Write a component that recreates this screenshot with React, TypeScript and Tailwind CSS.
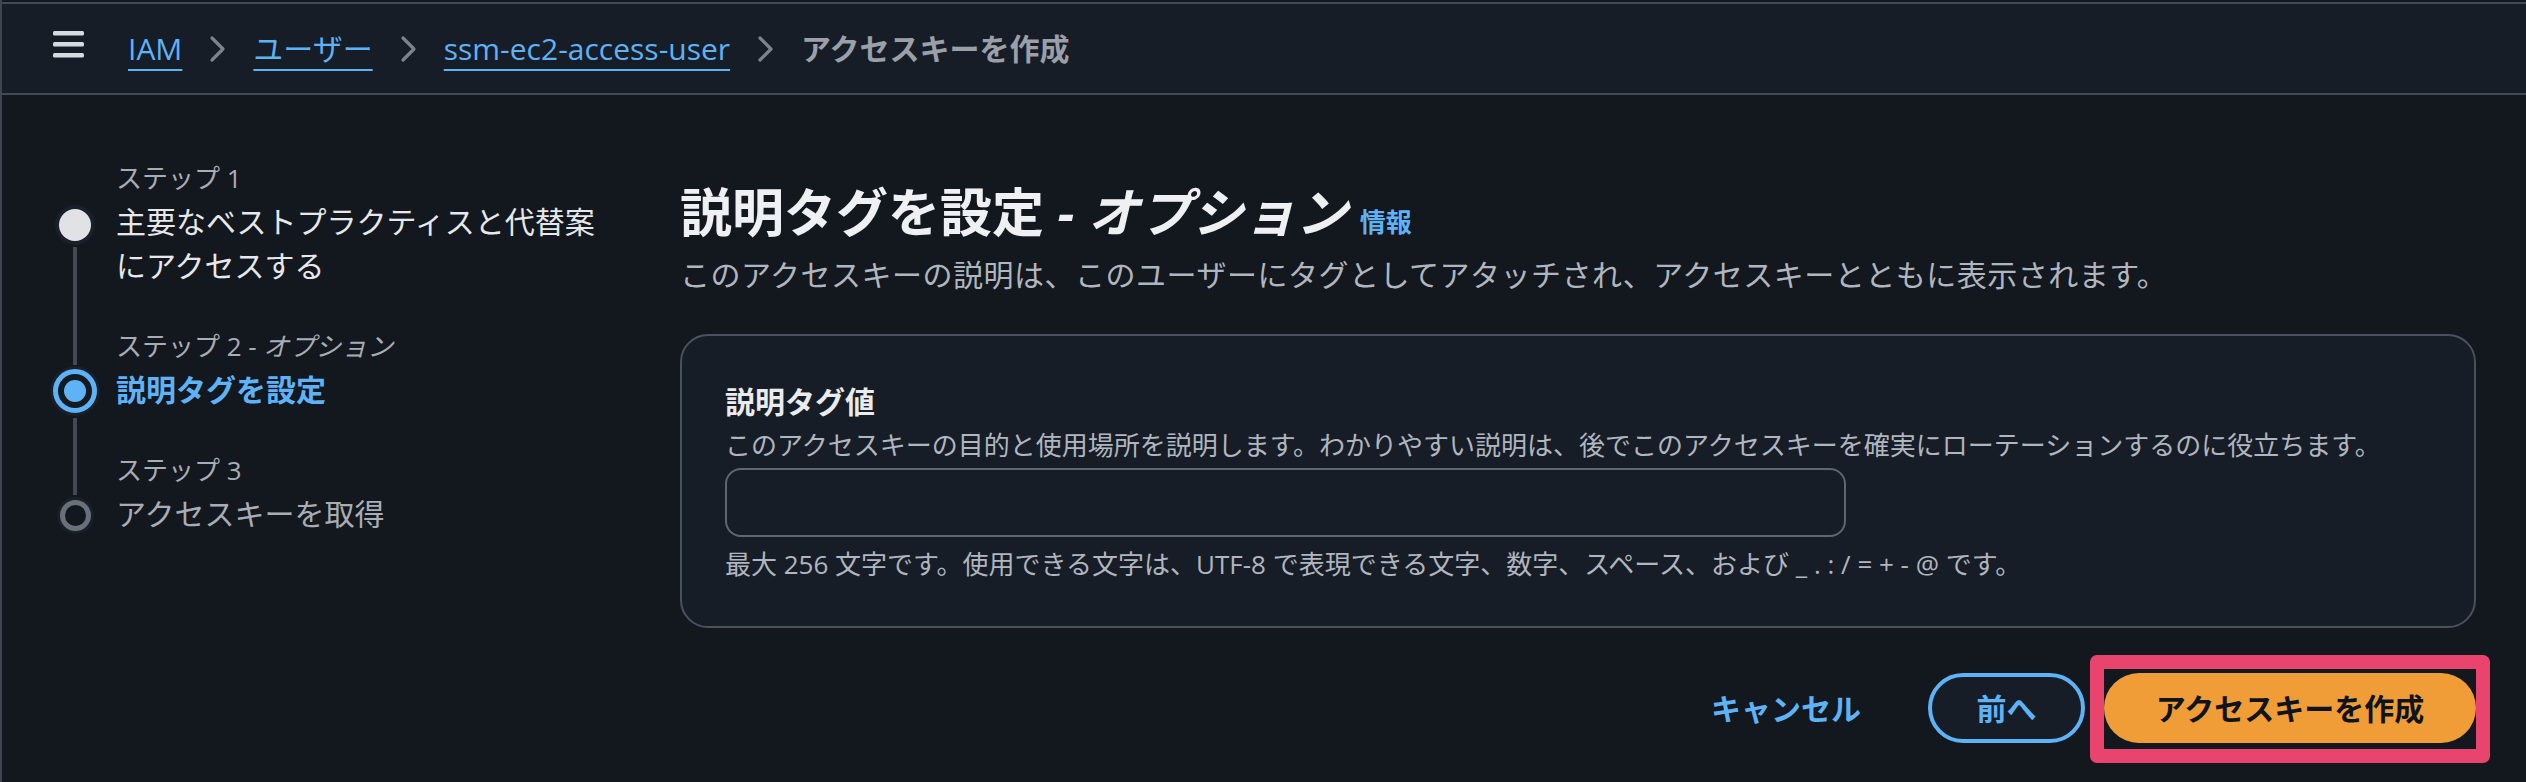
import React from "react";

const blue = "text-[#5eb2f6]";

function Chevron() {
  return (
    <svg width="19" height="28" viewBox="0 0 19 28" fill="none" className="shrink-0">
      <polyline
        points="4,3 15,14 4,25"
        stroke="#7c838e"
        strokeWidth="3.2"
        strokeLinecap="round"
        strokeLinejoin="round"
      />
    </svg>
  );
}

function Header() {
  return (
    <header className="flex h-[93px] items-center border-y-2 border-[#434a55] bg-[#161d26] pl-[51px]">
      <svg width="31" height="27" viewBox="0 0 31 27" className="-mt-[9px] shrink-0">
        <rect x="0" y="0" width="31" height="4.5" rx="1.5" fill="#d6dbe1" />
        <rect x="0" y="11" width="31" height="4.5" rx="1.5" fill="#d6dbe1" />
        <rect x="0" y="22" width="31" height="4.5" rx="1.5" fill="#d6dbe1" />
      </svg>
      <nav className="ml-[44px] flex items-center gap-[26px] text-[30px] leading-[40px]">
        <a className={`${blue} underline decoration-2 underline-offset-[9px]`}>IAM</a>
        <Chevron />
        <a className={`${blue} underline decoration-2 underline-offset-[9px]`}>ユーザー</a>
        <Chevron />
        <a className={`${blue} underline decoration-2 underline-offset-[9px]`}>ssm-ec2-access-user</a>
        <Chevron />
        <span className="font-bold text-[#9a9fa8]">アクセスキーを作成</span>
      </nav>
    </header>
  );
}

function Stepper() {
  return (
    <div className="flex flex-col">
      {/* step 1 - visited */}
      <div className="flex">
        <div className="flex w-[44px] shrink-0 flex-col items-center">
          <div className="h-[53px]" />
          <div className="h-[32px] w-[32px] rounded-full bg-[#e1e2e6] shadow-[0_0_0_4px_#1a2029]" />
          <div className="mt-[6px] w-[4px] flex-1 bg-[#424955]" />
        </div>
        <div className="ml-[19px] w-[490px] pb-[36px]">
          <div className="text-[26px] leading-[44px] text-[#a8adb5]">ステップ 1</div>
          <div className="text-[30px] leading-[44px] text-[#e6e8eb]">
            主要なベストプラクティスと代替案にアクセスする
          </div>
        </div>
      </div>

      {/* step 2 - active */}
      <div className="flex">
        <div className="flex w-[44px] shrink-0 flex-col items-center">
          <div className="h-[41px] w-[4px] bg-[#424955]" />
          <div className="mt-[4px] flex h-[44px] w-[44px] items-center justify-center rounded-full border-[5px] border-[#5eb2f6] bg-[#141a22] shadow-[0_0_0_3px_#1a2029]">
            <div className="h-[22px] w-[22px] rounded-full bg-[#5eb2f6]" />
          </div>
          <div className="mt-[5px] w-[4px] flex-1 bg-[#424955]" />
        </div>
        <div className="ml-[19px] w-[490px] pb-[36px]">
          <div className="text-[26px] leading-[44px] text-[#a8adb5]">
            ステップ 2 <i>- オプション</i>
          </div>
          <div className={`text-[30px] font-bold leading-[44px] ${blue}`}>説明タグを設定</div>
        </div>
      </div>

      {/* step 3 - not visited */}
      <div className="flex">
        <div className="flex w-[44px] shrink-0 flex-col items-center">
          <div className="h-[47px] w-[4px] bg-[#424955]" />
          <div className="mt-[5px] h-[31px] w-[31px] rounded-full border-[5px] border-[#6a7079] shadow-[0_0_0_3px_#1a2029]" />
        </div>
        <div className="ml-[19px] w-[490px]">
          <div className="text-[26px] leading-[44px] text-[#a8adb5]">ステップ 3</div>
          <div className="text-[30px] leading-[44px] text-[#a8adb5]">アクセスキーを取得</div>
        </div>
      </div>
    </div>
  );
}

function TagForm() {
  return (
    <div className="flex-1 pr-[50px] pt-[85px]">
      <div className="flex items-baseline">
        <h1 className="text-[52px] font-bold leading-[64px] text-[#eef0f3]">
          説明タグを設定 <i>- オプション</i>
        </h1>
        <a className={`ml-[12px] text-[26px] font-bold ${blue}`}>情報</a>
      </div>
      <p className="mt-[9px] text-[30px] leading-[44px] tracking-[0.5px] text-[#b0b6bf]">
        このアクセスキーの説明は、このユーザーにタグとしてアタッチされ、アクセスキーとともに表示されます。
      </p>

      <div className="mt-[37px] rounded-[28px] border-2 border-[#4a515c] bg-[#171d26] px-[43px] pb-[45px] pt-[44px]">
        <label className="block text-[30px] font-bold leading-[44px] text-[#e9ebed]">説明タグ値</label>
        <div className="mt-[4px] text-[26px] leading-[34px] text-[#b0b6bf]">
          このアクセスキーの目的と使用場所を説明します。わかりやすい説明は、後でこのアクセスキーを確実にローテーションするのに役立ちます。
        </div>
        <input
          type="text"
          className="mt-[6px] block h-[69px] w-[1121px] rounded-[16px] border-2 border-[#5f6671] bg-transparent px-[24px] text-[30px] text-[#e9ebed] outline-none"
        />
        <div className="mt-[10px] text-[26px] leading-[34px] text-[#b0b6bf]">
          最大 256 文字です。使用できる文字は、UTF-8 で表現できる文字、数字、スペース、および _ . : / = + - @ です。
        </div>
      </div>

      <div className="mt-[45px] flex items-center justify-end">
        <button className={`h-[70px] rounded-full px-[45px] text-[30px] font-bold ${blue}`}>キャンセル</button>
        <button
          className={`ml-[22px] h-[70px] w-[157px] rounded-full border-[4px] border-[#5eb2f6] bg-[#161d26] text-[30px] font-bold ${blue}`}
        >
          前へ
        </button>
        <div className="relative ml-[19px]">
          <button className="h-[70px] w-[372px] rounded-full bg-[#f09d37] text-[30px] font-bold text-[#0f141a]">
            アクセスキーを作成
          </button>
          {/* highlight frame drawn over the primary button */}
          <div className="pointer-events-none absolute -bottom-[20px] -left-[14px] -right-[14px] -top-[18px] rounded-[7px] border-[14px] border-[#e9446d]" />
        </div>
      </div>
    </div>
  );
}

export default function App() {
  return (
    <div className="min-h-screen w-full border-l-2 border-[#3f4550] bg-[#13171e] pt-[2px] font-['Open_Sans','Noto_Sans_CJK_JP',sans-serif]">
      <Header />
      <main className="flex">
        <div className="w-[678px] shrink-0 pl-[51px] pt-[61px]">
          <Stepper />
        </div>
        <TagForm />
      </main>
    </div>
  );
}
